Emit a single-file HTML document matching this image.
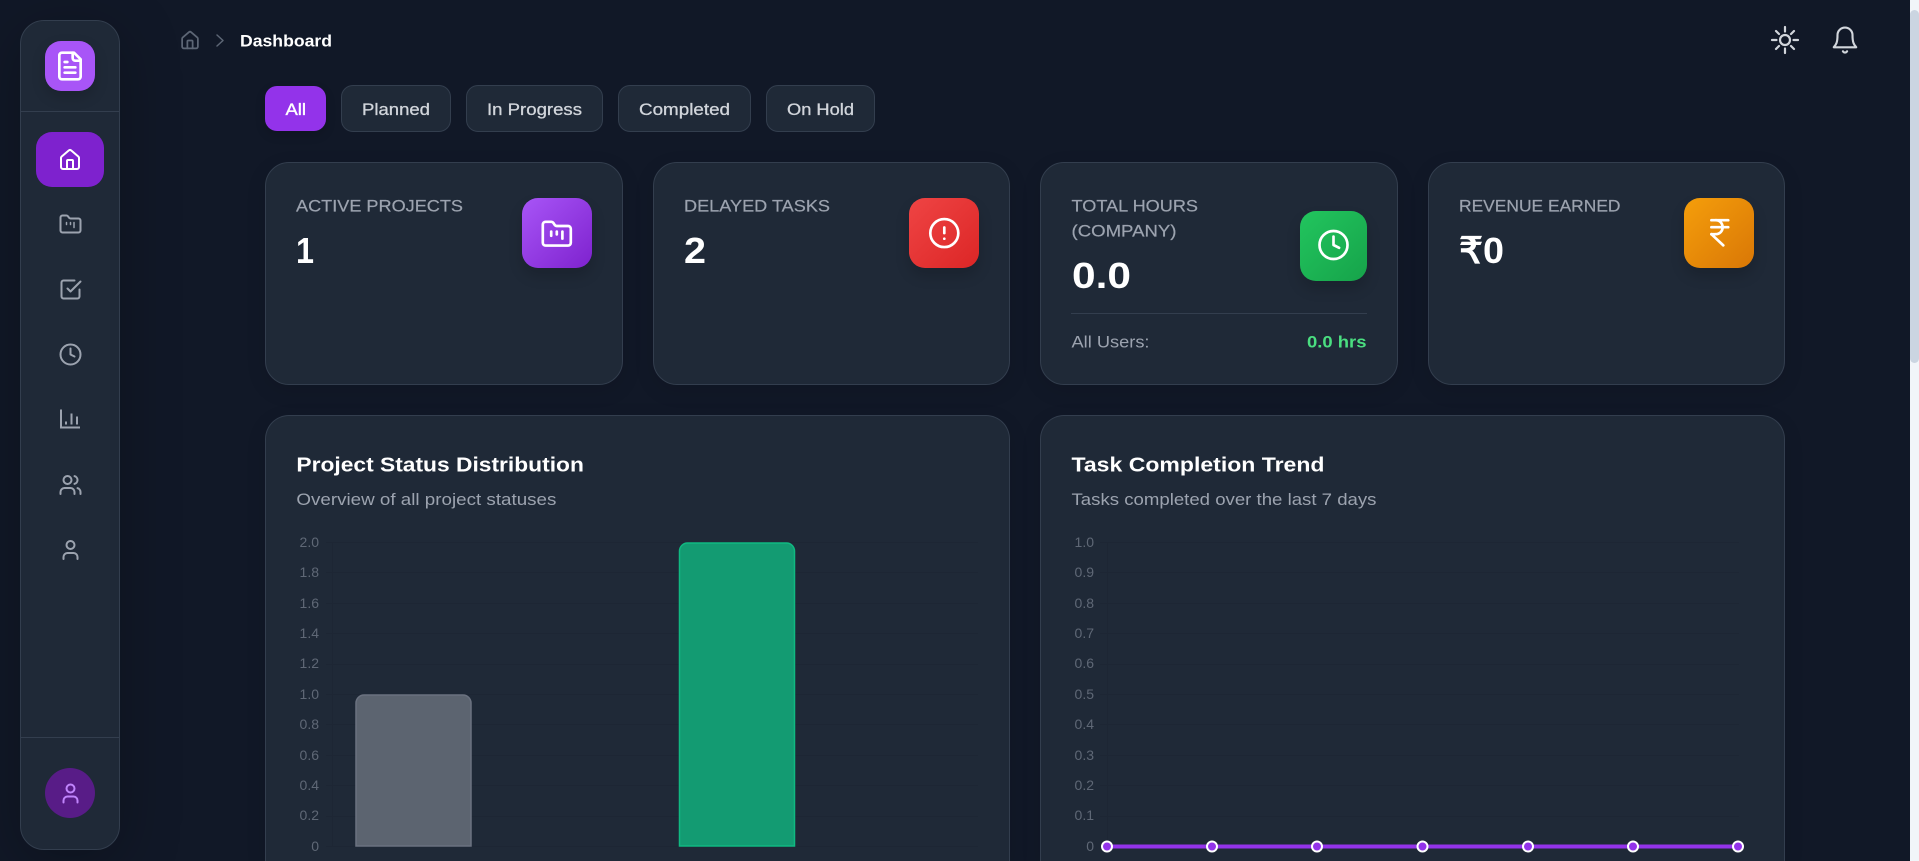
<!DOCTYPE html>
<html lang="en">
<head>
<meta charset="utf-8">
<title>Dashboard</title>
<style>
html,body{margin:0;padding:0;width:1919px;height:861px;overflow:hidden;background:#111827;}
body{position:relative;font-family:"Liberation Sans",Arial,sans-serif;}
.box{position:absolute;box-sizing:border-box;background:#1f2937;border:1px solid #333e4e;}
.card{border-radius:24px;box-shadow:0 6px 20px rgba(0,0,0,.1);}
.side{left:20px;top:20px;width:100px;height:830px;border-radius:24px;box-shadow:0 12px 60px rgba(0,0,0,.25);}
.line{position:absolute;height:1px;background:#333e4e;}
.btn{border-radius:12px;top:85px;height:47px;}
.grad{position:absolute;}
.sq{border-radius:16px;width:70px;height:70px;box-shadow:0 8px 14px rgba(0,0,0,.16);}
#lay{position:absolute;left:0;top:0;}
text{font-family:"Liberation Sans",Arial,sans-serif;}
.lb{font-size:16.5px;fill:#9ca3af;stroke:#9ca3af;stroke-width:.2px;}
.bd{font-size:16.5px;fill:#9ca3af;}
.vl{font-size:36.5px;font-weight:bold;fill:#fff;}
.tt{font-size:20.5px;font-weight:bold;fill:#fff;}
.ax{font-size:14px;fill:#5f6876;text-anchor:end;}
.fb{font-size:16.5px;fill:#d1d5db;stroke:#d1d5db;stroke-width:.3px;}
.i{fill:none;stroke-linecap:round;stroke-linejoin:round;stroke-width:2;}
.g{stroke:#9ca3af;}
.w{stroke:#fff;}
</style>
</head>
<body>
<div class="box side"></div>
<div class="line" style="left:21px;width:98px;top:111px"></div>
<div class="line" style="left:21px;width:98px;top:737px"></div>
<div class="grad" style="left:45px;top:41px;width:50px;height:50px;border-radius:16px;background:#a855f7;box-shadow:0 6px 14px rgba(0,0,0,.16)"></div>
<div class="grad" style="left:36px;top:132px;width:68px;height:55px;border-radius:16px;background:#7e22ce"></div>
<div class="grad" style="left:45px;top:768px;width:50px;height:50px;border-radius:50%;background:#581c87"></div>

<div class="grad" style="left:265px;top:86px;width:61px;height:45px;border-radius:12px;background:#9333ea;box-shadow:0 4px 10px rgba(0,0,0,.15)"></div>
<div class="box btn" style="left:341px;width:110px"></div>
<div class="box btn" style="left:466px;width:137px"></div>
<div class="box btn" style="left:618px;width:133px"></div>
<div class="box btn" style="left:766px;width:109px"></div>

<div class="box card" style="left:265px;top:162px;width:358px;height:223px"></div>
<div class="box card" style="left:653px;top:162px;width:357px;height:223px"></div>
<div class="box card" style="left:1040px;top:162px;width:358px;height:223px"></div>
<div class="box card" style="left:1428px;top:162px;width:357px;height:223px"></div>
<div class="line" style="left:1071px;width:296px;top:313px"></div>

<div class="grad sq" style="left:522px;top:198px;background:linear-gradient(135deg,#a855f7,#7e22ce)"></div>
<div class="grad sq" style="left:909px;top:198px;background:linear-gradient(135deg,#ef4444,#dc2626)"></div>
<div class="grad sq" style="left:1300px;top:211px;width:67px;background:linear-gradient(135deg,#22c55e,#16a34a)"></div>
<div class="grad sq" style="left:1684px;top:198px;background:linear-gradient(135deg,#f59e0b,#d97706)"></div>

<div class="box card" style="left:265px;top:415px;width:745px;height:446px;border-bottom:0;border-radius:24px 24px 0 0"></div>
<div class="box card" style="left:1040px;top:415px;width:745px;height:446px;border-bottom:0;border-radius:24px 24px 0 0"></div>

<div class="grad" style="left:1910px;top:0;width:9px;height:861px;background:#f1f5f9"></div>
<div class="grad" style="left:1910px;top:10px;width:9px;height:353px;background:#cbd5e1;border-radius:5px"></div>

<svg id="lay" width="1919" height="861" viewBox="0 0 1919 861" xmlns="http://www.w3.org/2000/svg">
<!-- logo -->
<g class="i w" transform="translate(54 50) scale(1.333)" style="stroke-width:2">
<path d="M15 2H6a2 2 0 0 0-2 2v16a2 2 0 0 0 2 2h12a2 2 0 0 0 2-2V7Z"/><path d="M14 2v4a2 2 0 0 0 2 2h4"/><path d="M10 9H8"/><path d="M16 13H8"/><path d="M16 17H8"/>
</g>
<!-- nav -->
<g class="i w" transform="translate(58 148)"><path d="M15 21v-8a1 1 0 0 0-1-1h-4a1 1 0 0 0-1 1v8"/><path d="M3 10a2 2 0 0 1 .71-1.53l7-6a2 2 0 0 1 2.58 0l7 6A2 2 0 0 1 21 10v9a2 2 0 0 1-2 2H5a2 2 0 0 1-2-2z"/></g>
<g class="i g" transform="translate(58.5 212.5)"><path d="M4 20h16a2 2 0 0 0 2-2V8a2 2 0 0 0-2-2h-7.930a2 2 0 0 1-1.660-.9l-.82-1.200A2 2 0 0 0 7.930 3H4a2 2 0 0 0-2 2v13c0 1.100.9 2 2 2Z"/><path d="M8 10v2" style="stroke-width:1.500"/><path d="M12 10v2" style="stroke-width:1.500"/><path d="M15.500 10v5" style="stroke-width:1.500"/></g>
<g class="i g" transform="translate(58.5 277.5)"><path d="m9 11 3 3L22 4"/><path d="M21 12v7a2 2 0 0 1-2 2H5a2 2 0 0 1-2-2V5a2 2 0 0 1 2-2h11"/></g>
<g class="i g" transform="translate(58.5 342.5)"><circle cx="12" cy="12" r="10"/><path d="M12 6v6l4 2"/></g>
<g class="i g" transform="translate(57.5 407.5)" style="stroke-linecap:butt;stroke-linejoin:miter"><path d="M3.500 2v18h19"/><path d="M8.500 17v-3"/><path d="M14 17V6"/><path d="M19.500 17V9"/></g>
<g class="i g" transform="translate(58.5 473)"><path d="M16 21v-2a4 4 0 0 0-4-4H6a4 4 0 0 0-4 4v2"/><circle cx="9" cy="7" r="4"/><path d="M22 21v-2a4 4 0 0 0-3-3.870"/><path d="M16 3.130a4 4 0 0 1 0 7.750"/></g>
<g class="i g" transform="translate(58.5 538)"><path d="M19 21v-2a4 4 0 0 0-4-4H9a4 4 0 0 0-4 4v2"/><circle cx="12" cy="7" r="4"/></g>
<g class="i" transform="translate(58.5 781.5)" style="stroke:#c084fc"><path d="M19 21v-2a4 4 0 0 0-4-4H9a4 4 0 0 0-4 4v2"/><circle cx="12" cy="7" r="4"/></g>
<!-- breadcrumb -->
<g class="i" transform="translate(179.500 30) scale(.875)" style="stroke:#5d6675"><path d="M15 21v-8a1 1 0 0 0-1-1h-4a1 1 0 0 0-1 1v8"/><path d="M3 10a2 2 0 0 1 .71-1.530l7-6a2 2 0 0 1 2.580 0l7 6A2 2 0 0 1 21 10v9a2 2 0 0 1-2 2H5a2 2 0 0 1-2-2z"/></g>
<path class="i" d="M217 35l6 5.500-6 5.500" style="stroke:#5d6675;stroke-width:1.500"/>
<text x="240" y="46.500" font-size="16.500" font-weight="bold" fill="#fff" textLength="92" lengthAdjust="spacingAndGlyphs">Dashboard</text>
<!-- sun/bell -->
<g class="i" style="stroke:#d1d5db;stroke-width:2.200">
<circle cx="1785" cy="40" r="5"/>
<path d="M1785 27v4.500M1785 48.500v4.500M1772 40h4.500M1793.500 40h4.500M1776 31l3 3M1791 46l3 3M1776 49l3-3M1791 34l3-3"/>
</g>
<g class="i" transform="translate(1830 25) scale(1.25)" style="stroke:#d1d5db;stroke-width:1.700"><path d="M6 8a6 6 0 0 1 12 0c0 6 1 7.500 3 9.800H3c2-2.300 3-3.800 3-9.800"/><path d="M10.300 21a1.940 1.940 0 0 0 3.400 0"/></g>
<!-- filters -->
<text x="285.500" y="115" font-size="16.500" fill="#fff" stroke="#fff" stroke-width=".35" textLength="20.500" lengthAdjust="spacingAndGlyphs">All</text>
<text class="fb" x="362" y="115" textLength="68" lengthAdjust="spacingAndGlyphs">Planned</text>
<text class="fb" x="487" y="115" textLength="95" lengthAdjust="spacingAndGlyphs">In Progress</text>
<text class="fb" x="639" y="115" textLength="91" lengthAdjust="spacingAndGlyphs">Completed</text>
<text class="fb" x="787" y="115" textLength="67" lengthAdjust="spacingAndGlyphs">On Hold</text>
<!-- stats -->
<text class="lb" x="296" y="211.500" textLength="167" lengthAdjust="spacingAndGlyphs">ACTIVE PROJECTS</text>
<text class="vl" x="296" y="263" textLength="18" lengthAdjust="spacingAndGlyphs">1</text>
<text class="lb" x="684" y="211.500" textLength="146" lengthAdjust="spacingAndGlyphs">DELAYED TASKS</text>
<text class="vl" x="684" y="263" textLength="22" lengthAdjust="spacingAndGlyphs">2</text>
<text class="lb" x="1071.500" y="211.500" textLength="126.500" lengthAdjust="spacingAndGlyphs">TOTAL HOURS</text>
<text class="lb" x="1071.500" y="236.500" textLength="105" lengthAdjust="spacingAndGlyphs">(COMPANY)</text>
<text class="vl" x="1072" y="288" textLength="59" lengthAdjust="spacingAndGlyphs">0.0</text>
<text class="bd" x="1071.500" y="347.500" textLength="78" lengthAdjust="spacingAndGlyphs">All Users:</text>
<text x="1307" y="347.500" font-size="16.500" font-weight="bold" fill="#4ade80" textLength="59.500" lengthAdjust="spacingAndGlyphs">0.0 hrs</text>
<text class="lb" x="1459" y="211.500" textLength="161.500" lengthAdjust="spacingAndGlyphs">REVENUE EARNED</text>
<text class="vl" x="1459" y="263" textLength="45" lengthAdjust="spacingAndGlyphs">₹0</text>
<!-- stat icons -->
<g class="i w" transform="translate(540 217.600) scale(1.400)" style="stroke-width:1.900"><path d="M4 20h16a2 2 0 0 0 2-2V8a2 2 0 0 0-2-2h-7.930a2 2 0 0 1-1.660-.9l-.82-1.200A2 2 0 0 0 7.930 3H4a2 2 0 0 0-2 2v13c0 1.100.9 2 2 2Z"/><path d="M8 10v3"/><path d="M12 10v2"/><path d="M16 10v5"/></g>
<g class="i w" transform="translate(927.500 216.300) scale(1.400)" style="stroke-width:1.900"><circle cx="12" cy="12" r="10"/><path d="M12 8v4"/><path d="M12 16h.01"/></g>
<g class="i w" transform="translate(1316.700 228.200) scale(1.400)" style="stroke-width:1.900"><circle cx="12" cy="12" r="10"/><path d="M12 6v6l4 2"/></g>
<g class="i w" transform="translate(1703 216) scale(1.400)" style="stroke-width:1.900"><path d="M6 3h12"/><path d="M6 8h12"/><path d="m6 13 8.500 8"/><path d="M6 13h3"/><path d="M9 13c6.667 0 6.667-10 0-10"/></g>
<!-- chart heads -->
<text class="tt" x="296.400" y="471.500" textLength="287.500" lengthAdjust="spacingAndGlyphs">Project Status Distribution</text>
<text class="bd" x="296.400" y="505" textLength="260" lengthAdjust="spacingAndGlyphs">Overview of all project statuses</text>
<text class="tt" x="1071.500" y="471.500" textLength="253" lengthAdjust="spacingAndGlyphs">Task Completion Trend</text>
<text class="bd" x="1071.500" y="505" textLength="305" lengthAdjust="spacingAndGlyphs">Tasks completed over the last 7 days</text>
<!-- grid -->
<g stroke="#1d2634" stroke-width="1" fill="none">
<path d="M332.500 542V846M326 542.500H978M326 572.500H978M326 603.500H978M326 633.500H978M326 664.500H978M326 694.500H978M326 724.500H978M326 755.500H978M326 785.500H978M326 816.500H978M326 846.500H978"/>
<path d="M1107.500 542V846M1100 542.500H1739M1100 572.500H1739M1100 603.500H1739M1100 633.500H1739M1100 664.500H1739M1100 694.500H1739M1100 724.500H1739M1100 755.500H1739M1100 785.500H1739M1100 816.500H1739"/>
</g>
<!-- axis -->
<g class="ax">
<text x="319" y="547">2.0</text><text x="319" y="577">1.8</text><text x="319" y="608">1.6</text><text x="319" y="638">1.4</text><text x="319" y="668">1.2</text><text x="319" y="699">1.0</text><text x="319" y="729">0.8</text><text x="319" y="760">0.6</text><text x="319" y="790">0.4</text><text x="319" y="820">0.2</text><text x="319" y="851">0</text>
<text x="1094" y="547">1.0</text><text x="1094" y="577">0.9</text><text x="1094" y="608">0.8</text><text x="1094" y="638">0.7</text><text x="1094" y="668">0.6</text><text x="1094" y="699">0.5</text><text x="1094" y="729">0.4</text><text x="1094" y="760">0.3</text><text x="1094" y="790">0.2</text><text x="1094" y="820">0.1</text><text x="1094" y="851">0</text>
</g>
<!-- bars -->
<path d="M356 846V703a8 8 0 0 1 8-8h99a8 8 0 0 1 8 8V846Z" fill="#5c6470" stroke="#6b7280" stroke-width="1.500"/>
<path d="M679.500 846V551a8 8 0 0 1 8-8h99a8 8 0 0 1 8 8V846Z" fill="#139b72" stroke="#10b981" stroke-width="1.500"/>
<!-- line -->
<path d="M1107 846.500H1738" stroke="#9333ea" stroke-width="4"/>
<g fill="#9333ea" stroke="#fff" stroke-width="2">
<circle cx="1107" cy="846.500" r="5"/><circle cx="1212" cy="846.500" r="5"/><circle cx="1317" cy="846.500" r="5"/><circle cx="1422.500" cy="846.500" r="5"/><circle cx="1528" cy="846.500" r="5"/><circle cx="1633" cy="846.500" r="5"/><circle cx="1738" cy="846.500" r="5"/>
</g>
</svg>
</body>
</html>
